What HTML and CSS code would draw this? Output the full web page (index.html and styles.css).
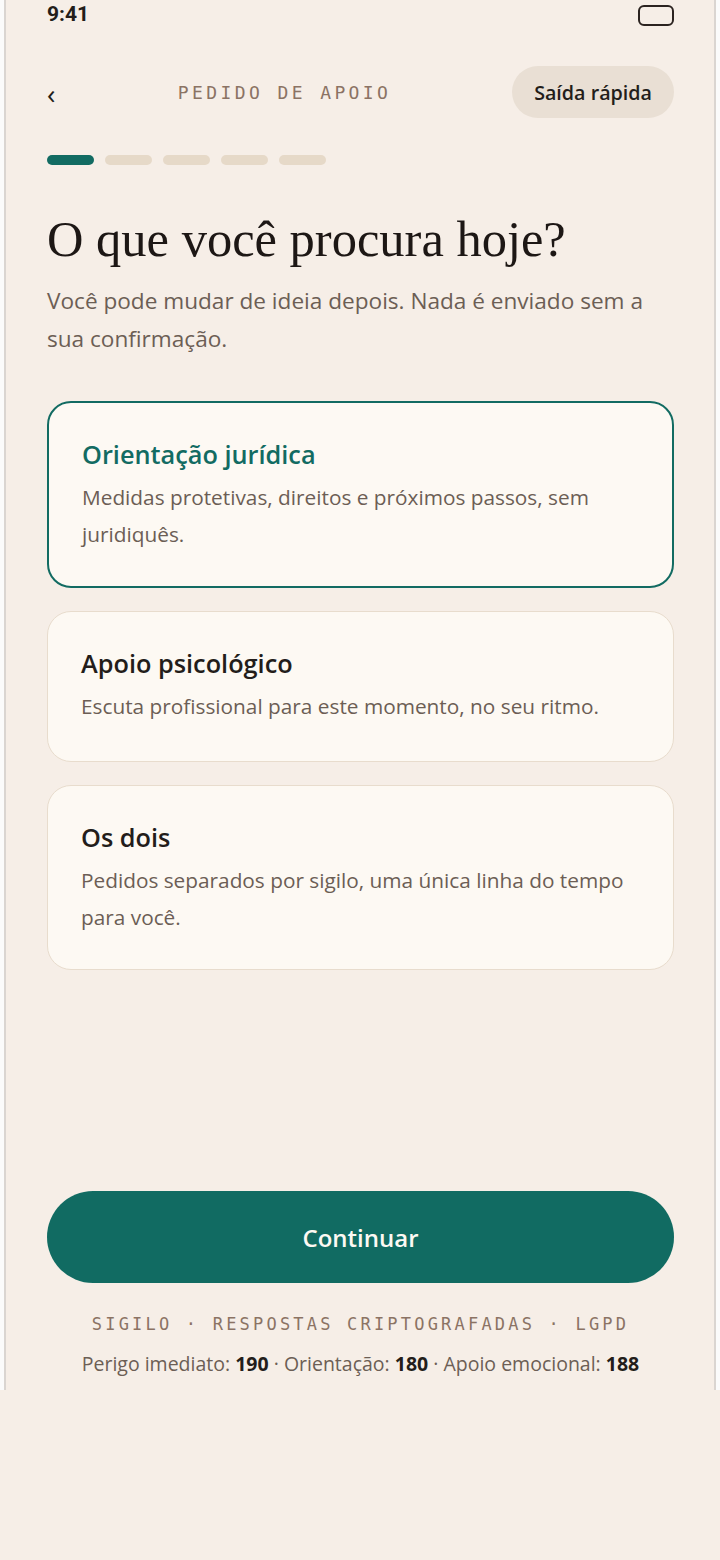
FILE: index.html
```html
<!DOCTYPE html>
<html lang="pt-BR">
<head>
<meta charset="utf-8">
<title>Pedido de apoio</title>
<link rel="stylesheet" href="styles.css">
</head>
<body>
<div class="page">
  <div class="device">
    <div class="status">
      <span class="time">9:41</span>
      <span class="battery"></span>
    </div>
    <header class="top">
      <span class="back">‹</span>
      <span class="top-title">PEDIDO DE APOIO</span>
      <span class="quick-exit">Saída rápida</span>
    </header>
    <div class="steps">
      <span class="step active"></span>
      <span class="step"></span>
      <span class="step"></span>
      <span class="step"></span>
      <span class="step"></span>
    </div>
    <h1 class="title">O que você procura hoje?</h1>
    <p class="lead">Você pode mudar de ideia depois. Nada é enviado sem a sua confirmação.</p>
    <div class="options">
      <div class="option selected">
        <div class="opt-title">Orientação jurídica</div>
        <div class="opt-desc">Medidas protetivas, direitos e próximos passos, sem juridiquês.</div>
      </div>
      <div class="option">
        <div class="opt-title">Apoio psicológico</div>
        <div class="opt-desc">Escuta profissional para este momento, no seu ritmo.</div>
      </div>
      <div class="option">
        <div class="opt-title">Os dois</div>
        <div class="opt-desc">Pedidos separados por sigilo, uma única linha do tempo para você.</div>
      </div>
    </div>
    <div class="spacer"></div>
    <button class="continue">Continuar</button>
    <div class="secure">SIGILO · RESPOSTAS CRIPTOGRAFADAS · LGPD</div>
    <div class="phones">Perigo imediato: <b>190</b> · Orientação: <b>180</b> · Apoio emocional: <b>188</b></div>
  </div>
</div>
</body>
</html>
```

FILE: styles.css
```css
* { box-sizing: border-box; }
html, body { margin: 0; padding: 0; }
body {
  background: #f6eee7;
  font-family: "Open Sans", "Noto Sans", sans-serif;
  color: #231d1a;
}
.page {
  background: #fbfbfb;
  height: 1390px;
  padding: 0 4px;
}
.device {
  height: 1390px;
  background: #f6eee7;
  border-left: 2px solid #dad5d1;
  border-right: 2px solid #dad5d1;
  padding: 0 40px 0 41px;
  display: flex;
  flex-direction: column;
}
.status {
  height: 30px;
  display: flex;
  justify-content: space-between;
  align-items: center;
}
.time {
  font-family: "Roboto", sans-serif;
  font-weight: 700;
  font-size: 21px;
  color: #231d1a;
  margin-top: -2px;
}
.battery {
  width: 36px;
  height: 21px;
  border: 2px solid #2b2320;
  border-radius: 6px;
}
.top {
  margin-top: 36px;
  height: 52px;
  display: flex;
  align-items: center;
}
.back {
  width: 10px;
  font-size: 28px;
  line-height: 1;
  color: #231d1a;
  margin-top: 2px;
}
.top-title {
  flex: 1;
  text-align: center;
  font-family: "DejaVu Sans Mono", monospace;
  font-size: 18px;
  letter-spacing: 3.4px;
  color: #8b7364;
}
.quick-exit {
  height: 52px;
  padding: 0 22px;
  border-radius: 26px;
  background: #e9dfd4;
  display: flex;
  align-items: center;
  font-weight: 600;
  font-size: 19.7px;
  color: #231d1a;
}
.steps {
  margin-top: 37px;
  display: flex;
  gap: 11px;
}
.step {
  width: 47px;
  height: 10px;
  border-radius: 5px;
  background: #e6d9c8;
}
.step.active { background: #126b62; }
.title {
  margin: 44px 0 0;
  font-family: "Liberation Serif", serif;
  font-weight: 400;
  font-size: 50.5px;
  line-height: 60px;
  color: #1d1715;
}
.lead {
  margin: 13px 0 0;
  font-size: 22.6px;
  line-height: 38px;
  color: #6c5e55;
}
.options {
  margin-top: 43px;
  display: flex;
  flex-direction: column;
  gap: 23px;
}
.option {
  background: #fdf9f3;
  border: 1.5px solid #e8dccd;
  border-radius: 24px;
  padding: 34px 33px 33px;
  min-height: 151px;
}
.option.selected {
  border: 2px solid #126b62;
}
.opt-title {
  font-weight: 600;
  font-size: 25.3px;
  line-height: 34px;
  color: #231d1a;
}
.selected .opt-title { color: #126b62; }
.opt-desc {
  margin-top: 8px;
  font-size: 20.8px;
  line-height: 37px;
  color: #6c5e55;
}
.spacer { flex: 1; }
.continue {
  height: 92px;
  border: none;
  border-radius: 46px;
  background: #116b62;
  color: #fdf9f3;
  font-family: "Open Sans", sans-serif;
  font-weight: 600;
  font-size: 24px;
}
.secure {
  margin-top: 31px;
  text-align: center;
  font-family: "DejaVu Sans Mono", monospace;
  font-size: 17px;
  letter-spacing: 3.2px;
  color: #8b7364;
}
.phones {
  margin-top: 17px;
  margin-bottom: 13px;
  text-align: center;
  font-size: 19.5px;
  line-height: 26px;
  color: #6c5e55;
}
.phones b { color: #231d1a; font-weight: 700; }
```
